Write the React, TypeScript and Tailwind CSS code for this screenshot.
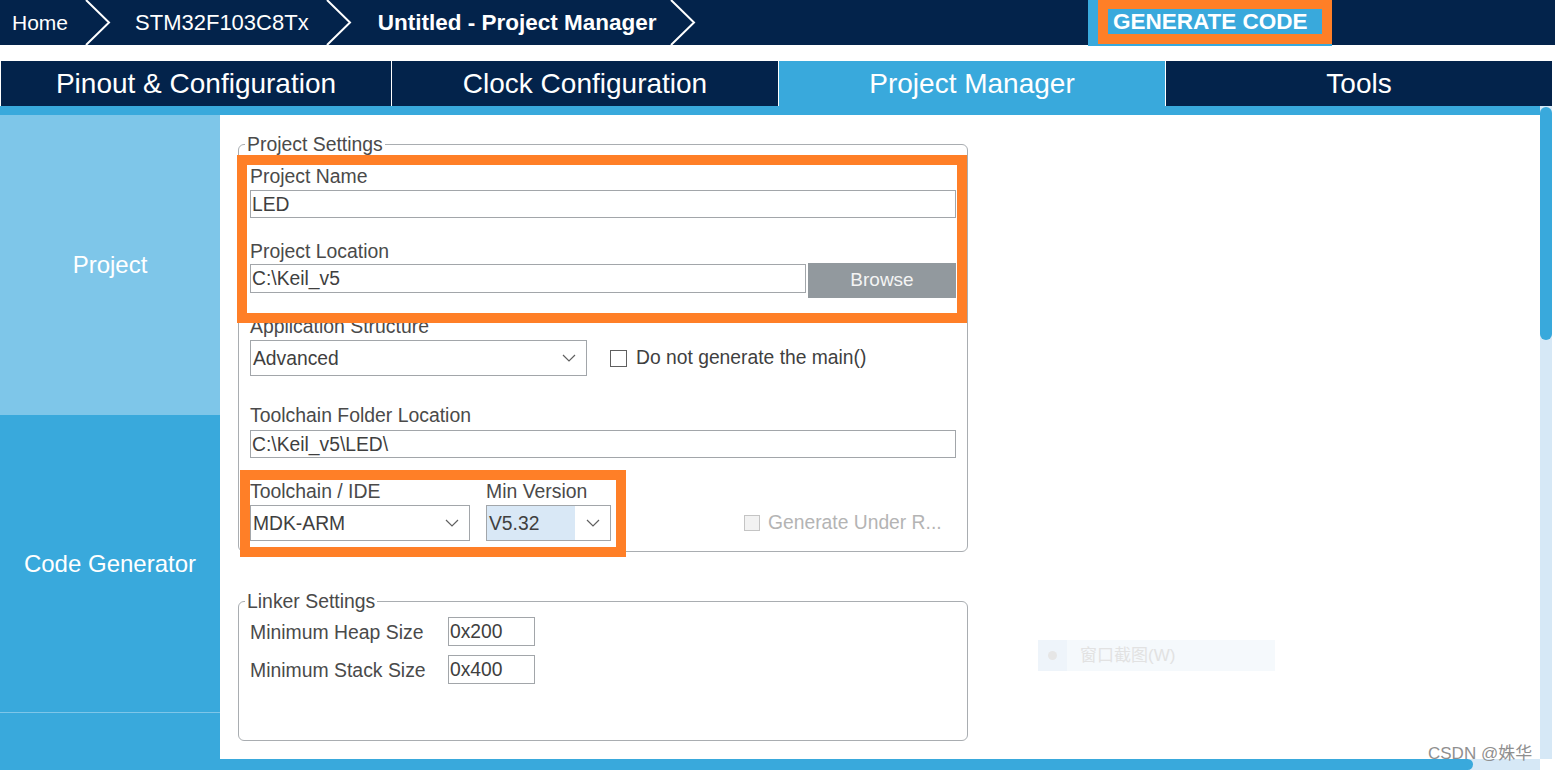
const NAVY = "bg-[#03234b]";

function Chevron() {
  return (
    <svg width="26" height="45" viewBox="0 0 26 45" className="shrink-0">
      <polyline points="1,0 24,22.5 1,45" fill="none" stroke="#ffffff" strokeWidth="2" />
    </svg>
  );
}

function Caret() {
  return (
    <svg width="14" height="8" viewBox="0 0 14 8" className="shrink-0">
      <polyline points="1,1 7,7 13,1" fill="none" stroke="#606060" strokeWidth="1.2" />
    </svg>
  );
}

function Label({ children, className = "" }: { children: React.ReactNode; className?: string }) {
  return <div className={"h-[22px] leading-[22px] text-[19.4px] text-[#4a4a4a] whitespace-nowrap " + className}>{children}</div>;
}

function TextBox({ value, className = "" }: { value: string; className?: string }) {
  return (
    <div className={"border border-[#a2a6aa] bg-white flex items-center pl-[1px] pt-[2px] text-[19.3px] text-[#3f3f3f] whitespace-nowrap " + className}>
      {value}
    </div>
  );
}

function Select({ value, className = "", shaded = false }: { value: string; className?: string; shaded?: boolean }) {
  return (
    <div className={"border border-[#a2a6aa] bg-white flex items-stretch text-[19.3px] text-[#3f3f3f] " + className}>
      <div className={"flex-1 flex items-center pl-[2px] pt-[2px] " + (shaded ? "bg-[#d9e8f6]" : "")}>{value}</div>
      <div className="w-[35px] flex items-center justify-center">
        <Caret />
      </div>
    </div>
  );
}

export default function App() {
  const tabs = [
    { name: "Pinout & Configuration", w: "w-[390px]", active: false },
    { name: "Clock Configuration", w: "w-[386px]", active: false },
    { name: "Project Manager", w: "w-[386px]", active: true },
    { name: "Tools", w: "w-[386px]", active: false },
  ];

  return (
    <div className="relative w-[1555px] h-[770px] overflow-hidden bg-white font-['Liberation_Sans',Arial,sans-serif]">
      {/* breadcrumb bar */}
      <div className={`h-[45px] ${NAVY} flex`}>
        <div className="w-[1088px] flex items-center text-white text-[21px]">
          <span className="ml-[12px]">Home</span>
          <div className="ml-[17px]"><Chevron /></div>
          <span className="ml-[24px] text-[22px]">STM32F103C8Tx</span>
          <div className="ml-[17px]"><Chevron /></div>
          <span className="ml-[26px] font-bold text-[22.5px]">Untitled - Project Manager</span>
          <div className="ml-[14px]"><Chevron /></div>
        </div>
        <div className="w-[244px] h-[46px] bg-[#39a9dc] pl-[10px]">
          <div className="w-[234px] h-[44px] border-[#ff7f27] border-x-[10px] border-t-[9px] border-b-[10px] bg-[#39a9dc] flex items-center pl-[5px] text-white font-bold text-[22.5px] whitespace-nowrap">
            GENERATE CODE
          </div>
        </div>
      </div>

      {/* tabs */}
      <div className="mt-[16px] h-[45px] flex gap-[1px] pl-[1px]">
        {tabs.map((t) => (
          <div
            key={t.name}
            className={`${t.w} h-full flex items-center justify-center text-white text-[28px] ${t.active ? "bg-[#39a9dc]" : NAVY}`}
          >
            {t.name}
          </div>
        ))}
      </div>

      {/* body */}
      <div className="flex h-[664px]">
        <div className="w-[1540px] flex flex-col">
          <div className="h-[9px] bg-[#39a9dc]" />
          <div className="h-[644px] flex">
            {/* sidebar */}
            <div className="w-[220px] flex flex-col text-white text-[24px]">
              <div className="h-[300px] bg-[#7ec6e9] flex items-center justify-center">Project</div>
              <div className="h-[297px] bg-[#39a9dc] flex items-center justify-center">Code Generator</div>
              <div className="h-[1px] bg-[#7ec6e9]" />
              <div className="flex-1 bg-[#39a9dc]" />
            </div>

            {/* content */}
            <div className="relative flex-1 bg-white pl-[18px] pt-[18px]">
              <fieldset className="w-[730px] border border-[#a9adb1] rounded-[6px] px-[11px] pb-[10px]">
                <legend className="ml-[-5px] px-[2px] h-[22px] leading-[22px] text-[19.4px] text-[#4a4a4a]">Project Settings</legend>
                <Label className="mt-[10px]">Project Name</Label>
                <TextBox value="LED" className="mt-[3px] h-[28px]" />
                <Label className="mt-[22px]">Project Location</Label>
                <div className="flex items-start h-[35px]">
                  <TextBox value="C:\Keil_v5" className="mt-[2px] h-[29px] w-[556px]" />
                  <div className="ml-[2px] w-[148px] h-[35px] mt-[1px] bg-[#92999e] flex items-center justify-center text-[19px] text-[#f4f4f4]">
                    Browse
                  </div>
                </div>
                <Label className="mt-[18px]">Application Structure</Label>
                <div className="mt-[3px] flex items-center">
                  <Select value="Advanced" className="w-[337px] h-[36px]" />
                  <div className="ml-[23px] w-[17px] h-[17px] border border-[#5f5f5f] bg-white" />
                  <span className="ml-[9px] text-[19.3px] text-[#3f3f3f] whitespace-nowrap">Do not generate the main()</span>
                </div>
                <Label className="mt-[28px]">Toolchain Folder Location</Label>
                <TextBox value="C:\Keil_v5\LED\" className="mt-[4px] h-[28px]" />
                <div className="mt-[22px] flex items-end">
                  <div className="w-[220px]">
                    <Label>Toolchain / IDE</Label>
                    <Select value="MDK-ARM" className="mt-[3px] h-[36px]" />
                  </div>
                  <div className="ml-[16px] w-[125px]">
                    <Label>Min Version</Label>
                    <Select value="V5.32" shaded className="mt-[3px] h-[36px]" />
                  </div>
                  <div className="ml-[133px] h-[36px] flex items-center">
                    <div className="w-[16px] h-[16px] border border-[#c4c4c4] bg-[#f2f2f2]" />
                    <span className="ml-[8px] text-[19.3px] text-[#b4b4b4] whitespace-nowrap">Generate Under R...</span>
                  </div>
                </div>
              </fieldset>

              <fieldset className="mt-[38px] w-[730px] border border-[#a9adb1] rounded-[6px] px-[11px] pb-[56px]">
                <legend className="ml-[-5px] px-[2px] h-[22px] leading-[22px] text-[19.4px] text-[#4a4a4a]">Linker Settings</legend>
                <div className="mt-[5px] flex items-center">
                  <Label className="w-[198px]">Minimum Heap Size</Label>
                  <TextBox value="0x200" className="w-[87px] h-[29px]" />
                </div>
                <div className="mt-[9px] flex items-center">
                  <Label className="w-[198px]">Minimum Stack Size</Label>
                  <TextBox value="0x400" className="w-[87px] h-[29px]" />
                </div>
              </fieldset>

              {/* faint context-menu ghost */}
              <div className="absolute left-[818px] top-[525px] w-[237px] h-[31px] bg-[#f5f9fc] flex items-center">
                <div className="w-[29px] h-full bg-[#eef4fa] flex items-center justify-center">
                  <div className="w-[9px] h-[9px] rounded-full bg-[#e6e6e6]" />
                </div>
                <span className="ml-[13px] text-[17px] text-[#e2e2e2] font-['Liberation_Sans','Noto_Sans_CJK_SC',sans-serif]">窗口截图(W)</span>
              </div>
            </div>
          </div>
          {/* horizontal scrollbar */}
          <div className="h-[11px] flex bg-[#d6e8f6]">
            <div className="w-[1473px] h-full bg-[#39a9dc] rounded-r-full" />
          </div>
        </div>

        {/* vertical scrollbar */}
        <div className="w-[12px] h-[653px] bg-[#d6e8f6] pt-[1px]">
          <div className="h-[233px] bg-[#39a9dc] rounded-full" />
        </div>
      </div>

      {/* annotation boxes */}
      <div className="pointer-events-none absolute left-[237px] top-[155px] w-[730px] h-[168px] border-[10px] border-[#ff7f27]" />
      <div className="pointer-events-none absolute left-[240px] top-[470px] w-[386px] h-[87px] border-[10px] border-[#ff7f27]" />

      {/* watermark */}
      <div className="absolute left-[1428px] top-[741px] text-[17px] text-[#8f8f8f] whitespace-nowrap font-['Liberation_Sans','Noto_Sans_CJK_SC',sans-serif]">
        CSDN @姝华
      </div>
    </div>
  );
}
